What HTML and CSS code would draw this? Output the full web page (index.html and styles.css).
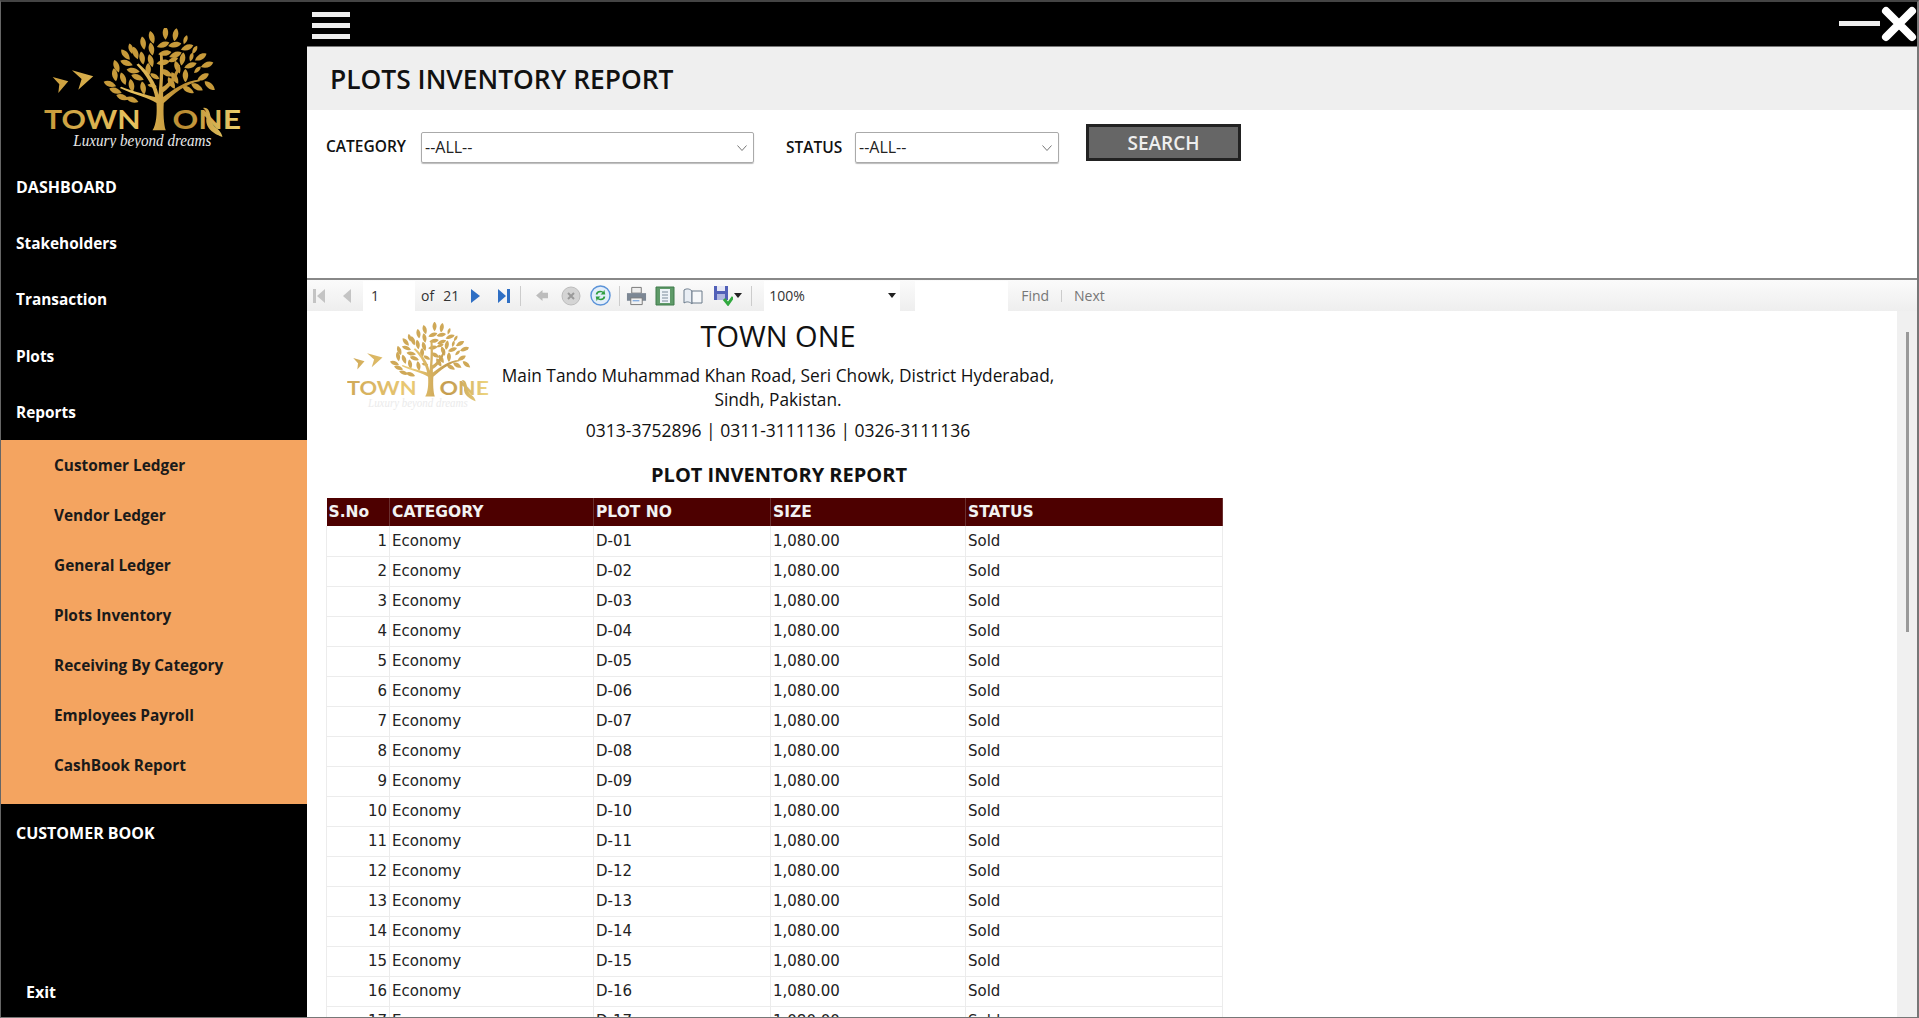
FILE: index.html
```html
<!DOCTYPE html>
<html lang="en">
<head>
    <meta charset="UTF-8">
    <title>Plots Inventory Report</title>
    <link rel="stylesheet" href="styles.css">
</head>
<body>
    <svg class="defs" width="0" height="0" aria-hidden="true">
        <defs>
            <linearGradient id="gold" gradientUnits="userSpaceOnUse" x1="130" y1="0" x2="730" y2="0">
                <stop offset="0" stop-color="#c79a3a"/>
                <stop offset="0.45" stop-color="#e8c25e"/>
                <stop offset="0.7" stop-color="#b98a30"/>
                <stop offset="1" stop-color="#eed36f"/>
            </linearGradient>
            <path id="leaf" d="M0 -20C11 -10 11 7 0 20C-11 7 -11 -10 0 -20Z"/>
            <symbol id="logo" viewBox="132 85 592 360">
                <g fill="url(#gold)">
                    <use href="#leaf" transform="translate(497 100)"/>
                    <use href="#leaf" transform="translate(527 105) rotate(10)"/>
                    <use href="#leaf" transform="translate(456 113) rotate(-15)"/>
                    <use href="#leaf" transform="translate(557 120) rotate(20) scale(.7)"/>
                    <use href="#leaf" transform="translate(430 130) rotate(-10)"/>
                    <use href="#leaf" transform="translate(393 147) rotate(-15) scale(.8)"/>
                    <use href="#leaf" transform="translate(490 135) rotate(70)"/>
                    <use href="#leaf" transform="translate(525 135) rotate(80)"/>
                    <use href="#leaf" transform="translate(585 150) rotate(30) scale(.7)"/>
                    <use href="#leaf" transform="translate(377 165) rotate(-40)"/>
                    <use href="#leaf" transform="translate(407 160) rotate(-20)"/>
                    <use href="#leaf" transform="translate(455 148) rotate(-10)"/>
                    <use href="#leaf" transform="translate(495 160) rotate(80)"/>
                    <use href="#leaf" transform="translate(527 165) rotate(70)"/>
                    <use href="#leaf" transform="translate(562 143) rotate(70)"/>
                    <use href="#leaf" transform="translate(603 172) rotate(60)"/>
                    <use href="#leaf" transform="translate(350 200) rotate(-20)"/>
                    <use href="#leaf" transform="translate(380 190) rotate(-70)"/>
                    <use href="#leaf" transform="translate(427 175) rotate(-10)"/>
                    <use href="#leaf" transform="translate(453 183) rotate(-15)"/>
                    <use href="#leaf" transform="translate(490 188) rotate(80)"/>
                    <use href="#leaf" transform="translate(520 180) rotate(70) scale(.8)"/>
                    <use href="#leaf" transform="translate(548 178) rotate(10)"/>
                    <use href="#leaf" transform="translate(575 172) rotate(15) scale(.7)"/>
                    <use href="#leaf" transform="translate(622 195) rotate(70)"/>
                    <use href="#leaf" transform="translate(345 225) rotate(-10)"/>
                    <use href="#leaf" transform="translate(400 213) rotate(-80)"/>
                    <use href="#leaf" transform="translate(445 210)"/>
                    <use href="#leaf" transform="translate(500 220) rotate(-60)"/>
                    <use href="#leaf" transform="translate(533 203) rotate(-20)"/>
                    <use href="#leaf" transform="translate(572 197) rotate(70)"/>
                    <use href="#leaf" transform="translate(593 210) rotate(45) scale(.7)"/>
                    <use href="#leaf" transform="translate(370 237) rotate(-20)"/>
                    <use href="#leaf" transform="translate(413 233) rotate(-70)"/>
                    <use href="#leaf" transform="translate(465 230) rotate(-60) scale(.8)"/>
                    <use href="#leaf" transform="translate(525 235) rotate(-30)"/>
                    <use href="#leaf" transform="translate(557 228)"/>
                    <use href="#leaf" transform="translate(610 232) rotate(60)"/>
                    <use href="#leaf" transform="translate(330 253) rotate(-70)"/>
                    <use href="#leaf" transform="translate(395 258) rotate(-10)"/>
                    <use href="#leaf" transform="translate(430 265) rotate(-10)"/>
                    <use href="#leaf" transform="translate(457 258) rotate(-80) scale(.7)"/>
                    <use href="#leaf" transform="translate(515 250) rotate(-30)"/>
                    <use href="#leaf" transform="translate(630 258) rotate(-50)"/>
                    <use href="#leaf" transform="translate(347 273) rotate(-70)"/>
                    <use href="#leaf" transform="translate(565 270) rotate(-60)"/>
                    <use href="#leaf" transform="translate(592 262) rotate(-60)"/>
                    <use href="#leaf" transform="translate(368 293) rotate(-70)"/>
                    <use href="#leaf" transform="translate(397 300) rotate(-70)"/>
                    <path d="M458 392C470 375 472 340 470 310C450 295 400 285 360 265L364 261C400 275 440 285 466 292C462 265 440 225 410 195L416 191C445 215 470 250 476 285C480 250 482 200 480 160L488 160C492 200 490 240 488 262C510 250 530 215 535 195L541 197C538 225 515 262 490 278V292C520 270 560 240 600 240L600 245C560 250 520 285 492 310C490 340 492 375 498 392Z"/>
                    <path d="M158 232L205 245L175 280L178 254ZM216 212L280 230L235 270L245 238Z"/>
                </g>
                <path d="M610 325C640 320 625 370 650 385C660 392 668 405 668 412C650 405 615 390 620 355C622 340 618 332 610 325Z" fill="url(#gold)"/>
                <text class="logo-word" x="132" y="388" textLength="290" lengthAdjust="spacingAndGlyphs" fill="url(#gold)">TOWN</text>
                <text class="logo-word" x="518" y="388" textLength="206" lengthAdjust="spacingAndGlyphs" fill="url(#gold)">ONE</text>
                <text class="logo-tag" x="220" y="438" textLength="415" lengthAdjust="spacingAndGlyphs">Luxury beyond dreams</text>
            </symbol>
        </defs>
    </svg>

    <div class="app">
        <aside class="sidebar">
            <svg class="side-logo"><use href="#logo"/></svg>
            <nav>
                <a class="nav-item caps">DASHBOARD</a>
                <a class="nav-item">Stakeholders</a>
                <a class="nav-item">Transaction</a>
                <a class="nav-item">Plots</a>
                <a class="nav-item">Reports</a>
                <div class="submenu">
                    <a class="sub-item">Customer Ledger</a>
                    <a class="sub-item">Vendor Ledger</a>
                    <a class="sub-item">General Ledger</a>
                    <a class="sub-item">Plots Inventory</a>
                    <a class="sub-item">Receiving By Category</a>
                    <a class="sub-item">Employees Payroll</a>
                    <a class="sub-item">CashBook Report</a>
                </div>
                <a class="nav-item caps">CUSTOMER BOOK</a>
            </nav>
            <a class="exit">Exit</a>
        </aside>

        <main class="main">
            <div class="topbar">
                <div class="burger"><span></span><span></span><span></span></div>
                <div class="win-btns">
                    <span class="win-min"></span>
                    <svg class="win-close" viewBox="0 0 36 36"><path d="M5 5L31 31M31 5L5 31" stroke="#fff" stroke-width="8" stroke-linecap="round"/></svg>
                </div>
            </div>

            <h1 class="page-title">PLOTS INVENTORY REPORT</h1>

            <form class="filters">
                <label class="filter-label">CATEGORY</label>
                <div class="select select-cat">--ALL--
                    <svg viewBox="0 0 10 6"><path d="M.5 .5L5 5.5L9.500 .5" fill="none" stroke="#777"/></svg>
                </div>
                <label class="filter-label filter-status">STATUS</label>
                <div class="select select-status">--ALL--
                    <svg viewBox="0 0 10 6"><path d="M.5 .5L5 5.5L9.500 .5" fill="none" stroke="#777"/></svg>
                </div>
                <button type="button" class="search-btn">SEARCH</button>
            </form>

            <section class="viewer">
                <div class="toolbar">
                    <svg class="tb-icon first" viewBox="0 0 14 16"><path d="M1 1H4V15H1ZM13 1V15L5 8Z" fill="#c4c4c4"/></svg>
                    <svg class="tb-icon prev" viewBox="0 0 9 16"><path d="M9 1V15L1 8Z" fill="#c4c4c4"/></svg>
                    <span class="tb-input page-num">1</span>
                    <span class="tb-text of">of</span>
                    <span class="tb-text total">21</span>
                    <svg class="tb-icon next" viewBox="0 0 9 16"><path d="M0 1V15L9 8Z" fill="#2f6fc4"/></svg>
                    <svg class="tb-icon last" viewBox="0 0 14 16"><path d="M13 1H10V15H13ZM1 1V15L9 8Z" fill="#2f6fc4"/></svg>
                    <span class="tb-sep sep1"></span>
                    <svg class="tb-icon back" viewBox="0 0 14 12"><path d="M0 6L7 0V3H13V9H7V12Z" fill="#bdbdbd"/></svg>
                    <svg class="tb-icon stop" viewBox="0 0 20 20"><circle cx="10" cy="10" r="9" fill="#d4d4d4" stroke="#bcbcbc"/><path d="M7 7L13 13M13 7L7 13" stroke="#9a9a9a" stroke-width="2"/></svg>
                    <svg class="tb-icon refresh" viewBox="0 0 22 22"><circle cx="11" cy="11" r="10" fill="#e3eefa" stroke="#5b93d8" stroke-width="1.500"/><path d="M6 10C6 6 11 5 14 7L15 5L16 10H11L13 8C11 7 8 8 8 10ZM16 12C16 16 11 17 8 15L7 17L6 12H11L9 14C11 15 14 14 14 12Z" fill="#2f9e3f"/></svg>
                    <span class="tb-sep sep2"></span>
                    <svg class="tb-icon print" viewBox="0 0 22 20"><path d="M6 1H16V7H6Z" fill="#eee" stroke="#777"/><path d="M1 7H21V15H1Z" fill="#7c8794"/><path d="M5 12H17V19H5Z" fill="#f2f2f2" stroke="#777"/><path d="M7 15H14" stroke="#5b93d8"/></svg>
                    <svg class="tb-icon layout" viewBox="0 0 20 20"><path d="M1 1H19V19H1Z" fill="#5e9a68" stroke="#3f7a4a"/><path d="M5 3H15V17H5Z" fill="#eef3f8"/><path d="M7 6H13M7 9H13M7 12H13M7 15H13" stroke="#7a8a9a"/></svg>
                    <svg class="tb-icon book" viewBox="0 0 20 18"><path d="M1 3C4 1 7 2 9 4V17C7 15 4 14 1 16Z" fill="#e9eef4" stroke="#6a7a8a"/><path d="M9 4H19V16H9Z" fill="#f6f8fa" stroke="#6a7a8a"/></svg>
                    <svg class="tb-icon save" viewBox="0 0 20 21"><path d="M1 1H15V15H1Z" fill="#5160b8"/><path d="M4 1H12V6H4Z" fill="#e6e8f5"/><path d="M4 9H12V15H4Z" fill="#aeb6e0"/><path d="M11 14L15 19L20 12" fill="none" stroke="#31a93f" stroke-width="3"/></svg>
                    <svg class="tb-caret save-caret" viewBox="0 0 8 5"><path d="M0 0H8L4 5Z" fill="#222"/></svg>
                    <span class="tb-sep sep3"></span>
                    <span class="tb-input zoom">100%<svg class="tb-caret" viewBox="0 0 8 5"><path d="M0 0H8L4 5Z" fill="#222"/></svg></span>
                    <span class="tb-input find-box"></span>
                    <span class="tb-link find">Find</span>
                    <span class="tb-pipe"></span>
                    <span class="tb-link">Next</span>
                </div>

                <div class="report-wrap">
                    <div class="report">
                        <div class="report-head">
                            <svg class="report-logo"><use href="#logo"/></svg>
                            <div class="company">
                                <div class="company-name">TOWN ONE</div>
                                <div class="company-addr">Main Tando Muhammad Khan Road, Seri Chowk, District Hyderabad,<br>Sindh, Pakistan.</div>
                                <div class="company-phone">0313-3752896 | 0311-3111136 | 0326-3111136</div>
                            </div>
                        </div>
                        <h2 class="report-title">PLOT INVENTORY REPORT</h2>
                        <table class="grid">
                            <thead>
                                <tr><th class="c-sno">S.No</th><th class="c-cat">CATEGORY</th><th class="c-plot">PLOT NO</th><th class="c-size">SIZE</th><th class="c-status">STATUS</th></tr>
                            </thead>
                            <tbody>
                                <tr><td class="num">1</td><td>Economy</td><td>D-01</td><td>1,080.00</td><td>Sold</td></tr>
                                <tr><td class="num">2</td><td>Economy</td><td>D-02</td><td>1,080.00</td><td>Sold</td></tr>
                                <tr><td class="num">3</td><td>Economy</td><td>D-03</td><td>1,080.00</td><td>Sold</td></tr>
                                <tr><td class="num">4</td><td>Economy</td><td>D-04</td><td>1,080.00</td><td>Sold</td></tr>
                                <tr><td class="num">5</td><td>Economy</td><td>D-05</td><td>1,080.00</td><td>Sold</td></tr>
                                <tr><td class="num">6</td><td>Economy</td><td>D-06</td><td>1,080.00</td><td>Sold</td></tr>
                                <tr><td class="num">7</td><td>Economy</td><td>D-07</td><td>1,080.00</td><td>Sold</td></tr>
                                <tr><td class="num">8</td><td>Economy</td><td>D-08</td><td>1,080.00</td><td>Sold</td></tr>
                                <tr><td class="num">9</td><td>Economy</td><td>D-09</td><td>1,080.00</td><td>Sold</td></tr>
                                <tr><td class="num">10</td><td>Economy</td><td>D-10</td><td>1,080.00</td><td>Sold</td></tr>
                                <tr><td class="num">11</td><td>Economy</td><td>D-11</td><td>1,080.00</td><td>Sold</td></tr>
                                <tr><td class="num">12</td><td>Economy</td><td>D-12</td><td>1,080.00</td><td>Sold</td></tr>
                                <tr><td class="num">13</td><td>Economy</td><td>D-13</td><td>1,080.00</td><td>Sold</td></tr>
                                <tr><td class="num">14</td><td>Economy</td><td>D-14</td><td>1,080.00</td><td>Sold</td></tr>
                                <tr><td class="num">15</td><td>Economy</td><td>D-15</td><td>1,080.00</td><td>Sold</td></tr>
                                <tr><td class="num">16</td><td>Economy</td><td>D-16</td><td>1,080.00</td><td>Sold</td></tr>
                                <tr><td class="num">17</td><td>Economy</td><td>D-17</td><td>1,080.00</td><td>Sold</td></tr>
                            </tbody>
                        </table>
                    </div>
                    <div class="scrollbar"><span class="thumb"></span></div>
                </div>
            </section>
        </main>
    </div>
</body>
</html>
```

FILE: styles.css
```css
* { box-sizing: border-box; }
html, body {
    margin: 0;
    height: 1018px;
    overflow: hidden;
    background-color: #fff;
    font-family: "Open Sans", "Noto Sans", sans-serif;
    color: #111;
}
.defs { display: block; height: 0; }
.logo-word { font-family: "Lato", sans-serif; font-weight: 700; font-size: 78px; }
.logo-tag { font-family: "Liberation Serif", serif; font-style: italic; font-size: 48px; fill: #e8e8e8; }

.app {
    display: flex;
    height: 1018px;
    border-top: 2px solid #444;
    border-left: 1px solid #666;
    border-right: 2px solid #777;
    border-bottom: 1px solid #777;
}

/* sidebar */
.sidebar {
    width: 306px;
    flex: none;
    background-color: #000;
    display: flex;
    flex-direction: column;
    color: #fff;
}
.side-logo { display: block; width: 197px; height: 120px; flex: none; margin: 26px 0 11px 43px; }
.nav-item {
    display: flex;
    align-items: center;
    height: 56.3px;
    padding-left: 15px;
    font-size: 15.4px;
    font-weight: 700;
}
.nav-item.caps { font-size: 16px; }
.submenu {
    background-color: #f4a460;
    padding: 0 0 14px;
    color: #1a1a1a;
    height: 364px;
}
.sub-item {
    display: flex;
    align-items: center;
    height: 50px;
    padding-left: 53px;
    font-size: 15.4px;
    font-weight: 700;
}
.exit {
    margin-top: auto;
    padding: 0 0 14px 25px;
    font-size: 16px;
    font-weight: 700;
}

/* main */
.main { flex: 1; min-width: 0; display: flex; flex-direction: column; }
.topbar {
    height: 45px;
    flex: none;
    background-color: #000;
    border-bottom: 1px solid #777;
    display: flex;
    justify-content: space-between;
    padding-left: 5px;
}
.burger { width: 38px; padding-top: 10px; display: flex; flex-direction: column; gap: 6px; }
.burger span { display: block; height: 5px; background-color: #eee; }
.win-btns { display: flex; align-items: flex-start; }
.win-min { width: 41px; height: 5px; margin-top: 19px; margin-right: 1px; background-color: #eee; }
.win-close { width: 36px; height: 36px; margin-top: 4px; }

.page-title {
    margin: 0;
    height: 63px;
    flex: none;
    background-color: #efefef;
    padding-left: 23px;
    font-size: 26.4px;
    font-weight: 600;
    line-height: 65px;
}

.filters {
    height: 170px;
    flex: none;
    display: flex;
    align-items: flex-start;
    padding-left: 19px;
    background-color: #fff;
    border-bottom: 2px solid #888;
}
.filter-label { font-size: 15.5px; font-weight: 600; margin-top: 25px; width: 95px; }
.filter-status { width: 69px; margin-top: 26px; margin-left: 32px; }
.select {
    position: relative;
    margin-top: 22px;
    height: 31px;
    border: 1px solid #aaa;
    border-radius: 2px;
    box-shadow: 0 1px 1px #bbb;
    padding-left: 3px;
    font-size: 16px;
    line-height: 29px;
    color: #222;
}
.select svg { position: absolute; right: 6px; top: 12px; width: 10px; height: 6px; }
.select-cat { width: 333px; }
.select-status { width: 204px; }
.search-btn {
    margin: 14px 0 0 27px;
    width: 155px;
    height: 37px;
    background-color: #666;
    border: 3px solid #222;
    color: #eee;
    font-family: inherit;
    font-size: 19px;
    font-weight: 600;
}

/* report viewer */
.viewer { flex: 1; min-height: 0; display: flex; flex-direction: column; }
.toolbar {
    height: 31px;
    flex: none;
    display: flex;
    align-items: center;
    background: linear-gradient(#fbfbfb, #eeeeee);
    font-size: 14px;
    color: #333;
    padding-left: 5px;
}
.tb-icon { flex: none; display: block; }
.first { width: 14px; height: 16px; }
.prev { width: 9px; height: 16px; margin-left: 16px; }
.tb-input { background-color: #fff; height: 30px; line-height: 30px; }
.page-num { width: 52px; margin-left: 12px; padding-left: 8px; }
.tb-text { margin-left: 7px; }
.of { margin-left: 6px; }
.total { margin-left: 9px; }
.next { width: 9px; height: 16px; margin-left: 12px; }
.last { width: 14px; height: 16px; margin-left: 17px; }
.tb-sep { width: 1px; height: 20px; background-color: #ccc; flex: none; }
.sep1 { margin-left: 9px; }
.back { width: 13px; height: 11px; margin-left: 15px; }
.stop { width: 20px; height: 20px; margin-left: 12px; }
.refresh { width: 21px; height: 21px; margin-left: 9px; }
.sep2 { margin-left: 8px; }
.print { width: 21px; height: 20px; margin-left: 6px; }
.layout { width: 20px; height: 20px; margin-left: 8px; }
.book { width: 20px; height: 18px; margin-left: 8px; }
.save { width: 20px; height: 21px; margin-left: 10px; }
.tb-caret { width: 8px; height: 5px; flex: none; }
.save-caret { margin-left: 1px; }
.sep3 { margin-left: 9px; }
.zoom {
    display: flex;
    align-items: center;
    justify-content: space-between;
    width: 136px;
    margin-left: 12px;
    padding: 0 4px 0 5px;
}
.find-box { width: 93px; margin-left: 15px; }
.tb-link { color: #777; }
.find { margin-left: 13px; }
.tb-pipe { width: 1px; height: 12px; background-color: #ccc; margin: 0 12px; }

.report-wrap { flex: 1; min-height: 0; display: flex; overflow: hidden; }
.report { flex: 1; min-width: 0; background-color: #fff; padding-left: 19px; overflow: hidden; }
.scrollbar { width: 20px; flex: none; background-color: #f0f0f0; padding: 21px 0 0 9px; }
.thumb { display: block; width: 3px; height: 300px; background-color: #999; }

.report-head { display: flex; padding-top: 5px; }
.report-logo { width: 142px; height: 88px; flex: none; margin: 6px 0 0 21px; opacity: .85; }
.company { width: 578px; text-align: center; color: #111; }
.company-name { font-size: 29px; line-height: 40px; }
.company-addr { font-size: 17.3px; line-height: 24px; margin-top: 8px; }
.company-phone { font-size: 17.500px; line-height: 24px; margin-top: 6px; }
.report-title {
    margin: 19px 0 0;
    width: 906px;
    text-align: center;
    font-size: 20px;
    font-weight: 700;
    line-height: 28px;
}

.grid {
    margin-top: 9px;
    width: 896px;
    border-collapse: collapse;
    table-layout: fixed;
    font-family: "DejaVu Sans", sans-serif;
    font-size: 15px;
    color: #222;
}
.grid th {
    height: 28px;
    background-color: #4d0000;
    color: #f2f2f2;
    text-align: left;
    padding: 0 2px;
    font-size: 15.5px;
    font-weight: 700;
    border-right: 1px solid #6a3030;
}
.grid td {
    height: 30px;
    padding: 0 2px;
    border: 1px solid #ececec;
    border-top: 0;
}
.grid .num { text-align: right; padding-right: 2px; }
.c-sno { width: 63px; }
.c-cat { width: 204px; }
.c-plot { width: 177px; }
.c-size { width: 195px; }
.c-status { width: 257px; }
```
